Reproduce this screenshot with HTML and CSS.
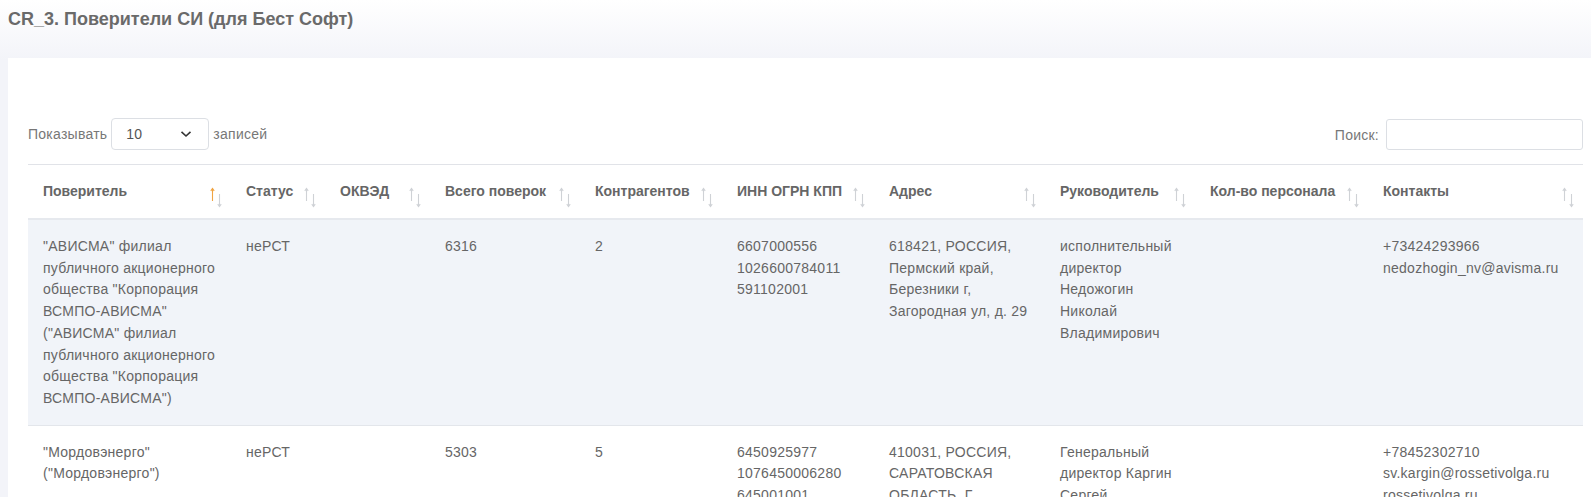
FILE: index.html
```html
<!DOCTYPE html>
<html lang="ru">
<head>
<meta charset="utf-8">
<title>CR_3. Поверители СИ (для Бест Софт)</title>
<link rel="stylesheet" href="styles.css">
</head>
<body>
<h1 class="page-title">CR_3. Поверители СИ (для Бест Софт)</h1>
<div class="card">
  <div class="controls">
    <div class="length">
      <span>Показывать</span>
      <div class="select-wrap">
        <select class="select"><option>10</option><option>25</option><option>50</option></select>
        <svg class="chev" width="12" height="8" viewBox="0 0 12 8"><path d="M1.5 1.8 L6 6 L10.5 1.8" fill="none" stroke="#333" stroke-width="1.6"/></svg>
      </div>
      <span>записей</span>
    </div>
    <div class="search">
      <span>Поиск:</span>
      <input class="search-input" type="text">
    </div>
  </div>
  <table class="grid">
    <colgroup>
      <col style="width:203px"><col style="width:94px"><col style="width:105px"><col style="width:150px"><col style="width:142px"><col style="width:152px"><col style="width:171px"><col style="width:150px"><col style="width:173px"><col style="width:215px">
    </colgroup>
    <thead>
      <tr>
        <th>Поверитель<svg class="sort" width="12" height="21" viewBox="0 0 12 21"><path class="up on" d="M2.5 1.5V14M0.8 3.8L2.5 1.5L4.2 3.8"/><path class="dn" d="M9.5 7V19.5M7.8 17.2L9.5 19.5L11.2 17.2"/></svg></th>
        <th>Статус<svg class="sort" width="12" height="21" viewBox="0 0 12 21"><path class="up" d="M2.5 1.5V14M0.8 3.8L2.5 1.5L4.2 3.8"/><path class="dn" d="M9.5 7V19.5M7.8 17.2L9.5 19.5L11.2 17.2"/></svg></th>
        <th>ОКВЭД<svg class="sort" width="12" height="21" viewBox="0 0 12 21"><path class="up" d="M2.5 1.5V14M0.8 3.8L2.5 1.5L4.2 3.8"/><path class="dn" d="M9.5 7V19.5M7.8 17.2L9.5 19.5L11.2 17.2"/></svg></th>
        <th>Всего поверок<svg class="sort" width="12" height="21" viewBox="0 0 12 21"><path class="up" d="M2.5 1.5V14M0.8 3.8L2.5 1.5L4.2 3.8"/><path class="dn" d="M9.5 7V19.5M7.8 17.2L9.5 19.5L11.2 17.2"/></svg></th>
        <th>Контрагентов<svg class="sort" width="12" height="21" viewBox="0 0 12 21"><path class="up" d="M2.5 1.5V14M0.8 3.8L2.5 1.5L4.2 3.8"/><path class="dn" d="M9.5 7V19.5M7.8 17.2L9.5 19.5L11.2 17.2"/></svg></th>
        <th>ИНН ОГРН КПП<svg class="sort" width="12" height="21" viewBox="0 0 12 21"><path class="up" d="M2.5 1.5V14M0.8 3.8L2.5 1.5L4.2 3.8"/><path class="dn" d="M9.5 7V19.5M7.8 17.2L9.5 19.5L11.2 17.2"/></svg></th>
        <th>Адрес<svg class="sort" width="12" height="21" viewBox="0 0 12 21"><path class="up" d="M2.5 1.5V14M0.8 3.8L2.5 1.5L4.2 3.8"/><path class="dn" d="M9.5 7V19.5M7.8 17.2L9.5 19.5L11.2 17.2"/></svg></th>
        <th>Руководитель<svg class="sort" width="12" height="21" viewBox="0 0 12 21"><path class="up" d="M2.5 1.5V14M0.8 3.8L2.5 1.5L4.2 3.8"/><path class="dn" d="M9.5 7V19.5M7.8 17.2L9.5 19.5L11.2 17.2"/></svg></th>
        <th>Кол-во персонала<svg class="sort" width="12" height="21" viewBox="0 0 12 21"><path class="up" d="M2.5 1.5V14M0.8 3.8L2.5 1.5L4.2 3.8"/><path class="dn" d="M9.5 7V19.5M7.8 17.2L9.5 19.5L11.2 17.2"/></svg></th>
        <th>Контакты<svg class="sort" width="12" height="21" viewBox="0 0 12 21"><path class="up" d="M2.5 1.5V14M0.8 3.8L2.5 1.5L4.2 3.8"/><path class="dn" d="M9.5 7V19.5M7.8 17.2L9.5 19.5L11.2 17.2"/></svg></th>
      </tr>
    </thead>
    <tbody>
      <tr class="odd">
        <td>"АВИСМА" филиал публичного акционерного общества "Корпорация ВСМПО-АВИСМА" ("АВИСМА" филиал публичного акционерного общества "Корпорация ВСМПО-АВИСМА")</td>
        <td>неРСТ</td>
        <td></td>
        <td>6316</td>
        <td>2</td>
        <td>6607000556 1026600784011 591102001</td>
        <td>618421, РОССИЯ, Пермский край, Березники г, Загородная ул, д. 29</td>
        <td>исполнительный директор Недожогин Николай Владимирович</td>
        <td></td>
        <td>+73424293966<br>nedozhogin_nv@avisma.ru</td>
      </tr>
      <tr class="even">
        <td>"Мордовэнерго" ("Мордовэнерго")</td>
        <td>неРСТ</td>
        <td></td>
        <td>5303</td>
        <td>5</td>
        <td>6450925977 1076450006280 645001001</td>
        <td>410031, РОССИЯ, САРАТОВСКАЯ ОБЛАСТЬ, Г.</td>
        <td>Генеральный директор Каргин Сергей</td>
        <td></td>
        <td>+78452302710<br>sv.kargin@rossetivolga.ru<br>rossetivolga.ru</td>
      </tr>
    </tbody>
  </table>
</div>
</body>
</html>
```

FILE: styles.css
```css
html, body {
  margin: 0;
  padding: 0;
  height: 497px;
  overflow: hidden;
}
body {
  font-family: "Liberation Sans", Arial, sans-serif;
  font-size: 14px;
  color: #666;
  background: linear-gradient(to bottom, #ffffff 0px, #f3f4f9 60px) no-repeat, #f3f4f9;
}
.page-title {
  margin: 0;
  padding: 9px 8px 28px;
  font-size: 18px;
  line-height: 21px;
  font-weight: bold;
  color: #6a6a6a;
}
.card {
  margin-left: 8px;
  background: #fff;
  padding: 60px 8px 0 20px;
  height: 440px;
  box-sizing: border-box;
  overflow: hidden;
}
.controls {
  display: flex;
  justify-content: space-between;
  align-items: center;
  margin-bottom: 14px;
  letter-spacing: 0.25px;
}
.length, .search {
  display: flex;
  align-items: center;
  gap: 4px;
  color: #777;
}
.search { gap: 7px; padding-top: 1px; }
.select-wrap {
  position: relative;
  width: 98px;
  height: 32px;
}
.select {
  appearance: none;
  -webkit-appearance: none;
  width: 98px;
  height: 32px;
  box-sizing: border-box;
  border: 1px solid #dcdfe4;
  border-radius: 4px;
  background: #fff;
  padding: 0 0 0 14px;
  font-family: "Liberation Sans", Arial, sans-serif;
  font-size: 14px;
  color: #555;
}
.chev {
  position: absolute;
  left: 69px;
  top: 12px;
  pointer-events: none;
}
.search-input {
  width: 197px;
  height: 31px;
  box-sizing: border-box;
  border: 1px solid #dcdfe4;
  border-radius: 3px;
  margin: 0;
  padding: 0 8px;
}
.grid {
  width: 100%;
  table-layout: fixed;
  border-collapse: collapse;
  border-top: 1px solid #e1e3e8;
}
.grid th {
  position: relative;
  text-align: left;
  font-weight: bold;
  color: #666;
  line-height: 21px;
  padding: 16px 22px 16px 15px;
  border-bottom: 2px solid #e6e9ee;
  white-space: nowrap;
}
.sort {
  position: absolute;
  right: 9px;
  top: 22px;
}
.sort path {
  fill: none;
  stroke: #cfd2d6;
  stroke-width: 1.1;
}
.sort path.on {
  stroke: #f0a443;
}
.grid td {
  vertical-align: top;
  line-height: 21.7px;
  padding: 16px 12px 15px 15px;
  color: #666;
  letter-spacing: 0.25px;
}
.grid tr.odd td {
  background: #f1f4f9;
}
.grid tr.even td {
  border-top: 1px solid #e3e6eb;
  background: #fff;
}
```
